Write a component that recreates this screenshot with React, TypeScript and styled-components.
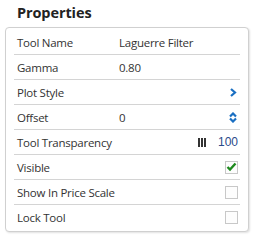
import * as React from "react";
import styled, { createGlobalStyle } from "styled-components";

const GlobalStyle = createGlobalStyle`
  html, body {
    margin: 0;
    padding: 0;
    background: #ffffff;
  }
  body {
    font-family: "Open Sans", "Liberation Sans", sans-serif;
    color: #333333;
  }
`;

const Wrapper = styled.div`
  width: 256px;
  height: 242px;
  padding: 0 0 0 5px;
  box-sizing: border-box;
`;

const Title = styled.h3`
  margin: 0;
  padding: 3px 0 0 12px;
  height: 27px;
  box-sizing: border-box;
  font-size: 14.5px;
  font-weight: 700;
  letter-spacing: -0.1px;
  color: #222222;
`;

const Panel = styled.div`
  width: 244px;
  height: 205px;
  box-sizing: border-box;
  border: 1px solid #d0d0d0;
  border-radius: 4px;
  box-shadow: 1px 1px 2px rgba(0, 0, 0, 0.12);
  padding: 2px 8px 0 8px;
  background: #ffffff;
`;

const Row = styled.div<{ last?: boolean }>`
  display: flex;
  align-items: center;
  height: 25px;
  padding: 0 3px;
  border-bottom: ${p => (p.last ? "none" : "1px solid #d4d4d4")};
  font-size: 11.5px;
  letter-spacing: -0.25px;
  white-space: nowrap;
  box-sizing: border-box;
`;

const Label = styled.span`
  min-width: 102px;
  flex-shrink: 0;
`;

const Value = styled.span`
  flex: 1;
`;

const Right = styled.span`
  margin-left: auto;
  display: flex;
  align-items: center;
  gap: 12px;
`;

const Bars = styled.span`
  display: flex;
  gap: 1px;
  span {
    width: 2px;
    height: 9px;
    background: #333333;
  }
`;

const Number = styled.span`
  font-family: "Liberation Sans", Arial, sans-serif;
  font-size: 12px;
  letter-spacing: 0;
  color: #2a4a8a;
  margin-right: -1px;
`;

const Checkbox = styled.span`
  width: 13px;
  height: 13px;
  border: 1px solid #c8c8c8;
  box-sizing: border-box;
  display: flex;
  align-items: center;
  justify-content: center;
  margin-right: -1px;
  background: #fdfdfd;
`;

const Chevron = () => (
  <svg width="7" height="9" viewBox="0 0 7 9">
    <path d="M1 1 L5 4.5 L1 8" fill="none" stroke="#1a6fc2" strokeWidth="2.2" />
  </svg>
);

const UpDown = () => (
  <svg width="8" height="11" viewBox="0 0 8 11">
    <path d="M1 4.5 L4 1.5 L7 4.5" fill="none" stroke="#1a6fc2" strokeWidth="2.2" />
    <path d="M1 6.5 L4 9.5 L7 6.5" fill="none" stroke="#1a6fc2" strokeWidth="2.2" />
  </svg>
);

const Check = () => (
  <svg width="11" height="10" viewBox="0 0 11 10">
    <path d="M1.5 5 L4 7.5 L9.5 1.5" fill="none" stroke="#1e8a1e" strokeWidth="2.4" />
  </svg>
);

export default function App() {
  return (
    <Wrapper>
      <GlobalStyle />
      <Title>Properties</Title>
      <Panel>
        <Row>
          <Label>Tool Name</Label>
          <Value>Laguerre Filter</Value>
        </Row>
        <Row>
          <Label>Gamma</Label>
          <Value>0.80</Value>
        </Row>
        <Row>
          <Label>Plot Style</Label>
          <Right><Chevron /></Right>
        </Row>
        <Row>
          <Label>Offset</Label>
          <Value>0</Value>
          <Right><UpDown /></Right>
        </Row>
        <Row>
          <Label>Tool Transparency</Label>
          <Right>
            <Bars><span /><span /><span /></Bars>
            <Number>100</Number>
          </Right>
        </Row>
        <Row>
          <Label>Visible</Label>
          <Right><Checkbox><Check /></Checkbox></Right>
        </Row>
        <Row>
          <Label>Show In Price Scale</Label>
          <Right><Checkbox /></Right>
        </Row>
        <Row last>
          <Label>Lock Tool</Label>
          <Right><Checkbox /></Right>
        </Row>
      </Panel>
    </Wrapper>
  );
}
